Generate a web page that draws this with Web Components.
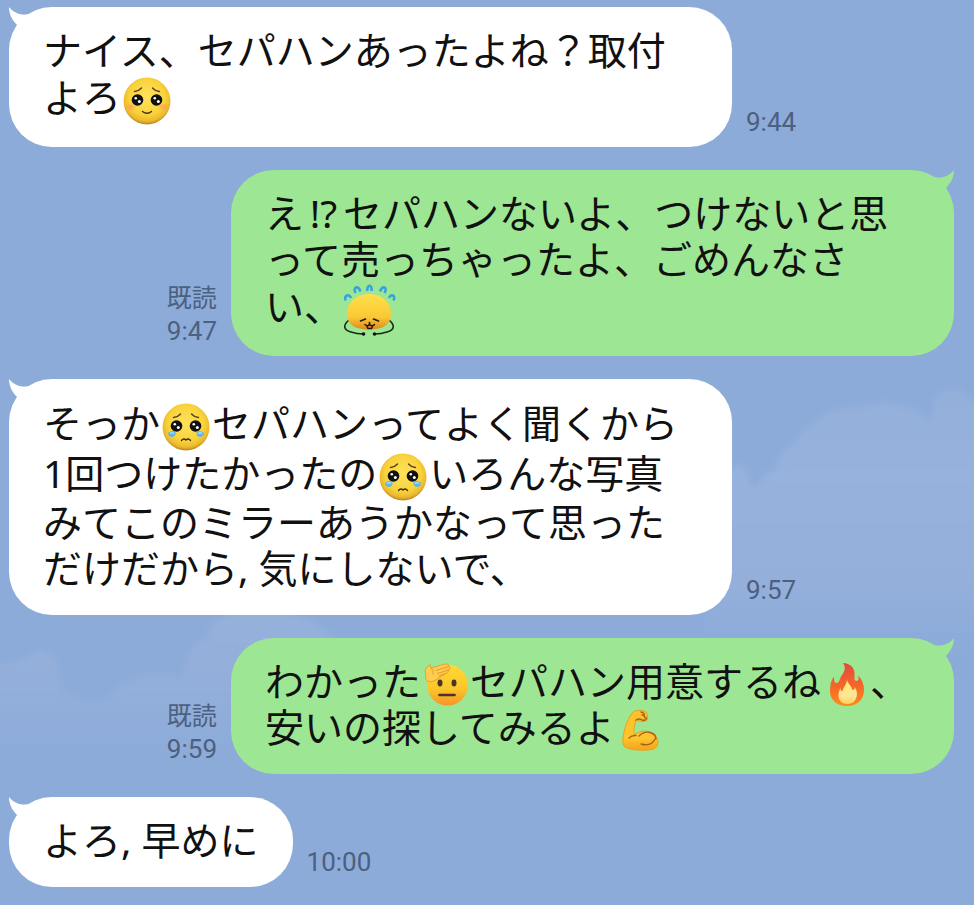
<!DOCTYPE html>
<html lang="ja">
<head>
<meta charset="utf-8">
<meta name="viewport" content="width=device-width, initial-scale=1">
<title>トーク</title>
<style>
    body {
        margin: 0;
        background: #8cabd9;
        font-family: "Noto Sans", "Noto Sans CJK JP", sans-serif;
    }
    .wide {
        display: inline-block;
        width: 1em;
        text-align: center;
    }
</style>
</head>
<body>
<chat-room>
    <chat-message time="9:44">ナイス、セパハンあったよね？取付よろ<chat-emoji name="pleading"></chat-emoji></chat-message>
    <chat-message sent time="9:47">え<span class="wide">!?</span>セパハンないよ、つけないと思って売っちゃったよ、ごめんなさい、<chat-emoji name="bow"></chat-emoji></chat-message>
    <chat-message time="9:57">そっか<chat-emoji name="tearful"></chat-emoji>セパハンってよく聞くから1回つけたかったの<chat-emoji name="tearful"></chat-emoji>いろんな写真みてこのミラーあうかなって思っただけだから, 気にしないで、</chat-message>
    <chat-message sent time="9:59">わかった<chat-emoji name="salute" small></chat-emoji>セパハン用意するね<chat-emoji name="fire" small></chat-emoji>、安いの探してみるよ<chat-emoji name="muscle" small></chat-emoji></chat-message>
    <chat-message time="10:00">よろ, 早めに</chat-message>
</chat-room>

<script>
// sky wallpaper and the column of messages
class ChatRoom extends HTMLElement {
    constructor() {
        super();
        this.attachShadow({ mode: "open" });
        this.shadowRoot.innerHTML = `
            <style>
                :host {
                    display: block;
                    position: relative;
                    box-sizing: border-box;
                    min-height: 100vh;
                    overflow: hidden;
                }
                .sky {
                    position: absolute;
                    inset: 0;
                    width: 100%;
                    height: 100%;
                }
                main {
                    position: relative;
                    display: flex;
                    flex-direction: column;
                    gap: 23px;
                    padding: 7px 20px 18px 9px;
                }
            </style>
            <svg class="sky" viewBox="0 0 974 905" preserveAspectRatio="xMidYMid slice" aria-hidden="true">
                <defs>
                    <linearGradient id="right" x1="0" y1="0" x2="0" y2="1">
                        <stop offset="0" stop-color="#97b2dc" stop-opacity=".6"/>
                        <stop offset=".3" stop-color="#97b2dc"/>
                        <stop offset=".7" stop-color="#94afda"/>
                        <stop offset="1" stop-color="#8cabd9" stop-opacity="0"/>
                    </linearGradient>
                    <linearGradient id="left" x1="0" y1="0" x2="0" y2="1">
                        <stop offset="0" stop-color="#96b1da"/>
                        <stop offset=".4" stop-color="#93aeda"/>
                        <stop offset="1" stop-color="#8cabd9" stop-opacity="0"/>
                    </linearGradient>
                    <filter id="soft"><feGaussianBlur stdDeviation="3"/></filter>
                </defs>
                <g filter="url(#soft)">
                    <path fill="url(#right)" d="M700 480Q715 468 733 468Q745 460 750 482Q754 495 762 478Q770 470 777 470Q776 452 795 443Q803 425 822 416Q836 405 858 408Q880 398 905 405Q922 408 926 420Q934 418 933 400Q945 382 960 390Q972 396 984 412V670H700Z"/>
                    <path fill="url(#left)" d="M-10 662Q15 667 32 654Q46 642 55 662Q60 672 62 690Q90 707 110 696Q118 680 138 680Q160 666 182 681Q184 655 198 642Q210 640 210 626Q222 612 250 610Q310 606 340 645V800H-10Z"/>
                </g>
            </svg>
            <main><slot></slot></main>
        `;
    }
}
customElements.define("chat-room", ChatRoom);

class ChatMessage extends HTMLElement {
    constructor() {
        super();
        this.attachShadow({ mode: "open" });
    }

    connectedCallback() {
        const sent = this.hasAttribute("sent");

        this.shadowRoot.innerHTML = `
            <style>
                :host {
                    display: flex;
                    align-items: flex-end;
                    gap: 14px;
                    --bubble: #fff;
                }
                :host([sent]) {
                    flex-direction: row-reverse;
                    --bubble: #9de693;
                }
                .bubble {
                    position: relative;
                    box-sizing: border-box;
                    max-width: min(723px, 80%);
                    padding: 20px 34px 24px;
                    border-radius: 43px;
                    background: var(--bubble);
                    color: #111;
                    font-size: 39px;
                    line-height: 46px;
                }
                p {
                    margin: 0;
                }
                .tail {
                    position: absolute;
                    top: 0;
                    left: 0;
                    width: 26px;
                    height: 26px;
                    fill: var(--bubble);
                }
                :host([sent]) .tail {
                    left: auto;
                    right: 0;
                    transform: scaleX(-1);
                }
                .meta {
                    display: flex;
                    flex-direction: column;
                    flex: none;
                    padding-bottom: 8px;
                    color: #4c607f;
                    font-family: Roboto, "Noto Sans CJK JP", sans-serif;
                    font-size: 26px;
                    line-height: 33px;
                }
                .read {
                    font-size: 25px;
                }
            </style>
            <div class="bubble">
                <svg class="tail" viewBox="0 0 26 26" aria-hidden="true">
                    <path d="M0 0C5 6 12 9 20 7L26 12L14 26L8 18C3 13 0 7 0 0Z"/>
                </svg>
                <p><slot></slot></p>
            </div>
            <div class="meta">
                ${sent ? `<span class="read">既読</span>` : ""}
                <time>${this.getAttribute("time")}</time>
            </div>
        `;
    }
}
customElements.define("chat-message", ChatMessage);

const faceFill = `
    <defs>
        <radialGradient id="face" cx=".5" cy=".42" r=".58">
            <stop offset="0" stop-color="#ffe25c"/>
            <stop offset=".65" stop-color="#f9d33c"/>
            <stop offset=".88" stop-color="#ebb92b"/>
            <stop offset="1" stop-color="#b98222"/>
        </radialGradient>
        <radialGradient id="blush">
            <stop offset="0" stop-color="#ff9a5c" stop-opacity=".8"/>
            <stop offset="1" stop-color="#ff9a5c" stop-opacity="0"/>
        </radialGradient>
    </defs>`;

const wetEyes = `
    <circle cx="25" cy="25" r="23.5" fill="url(#face)"/>
    <g fill="none" stroke="#59401a" stroke-width="1.4" stroke-linecap="round">
        <path d="M12.5 15.5Q17 15 19.500 12M30.500 12Q33 15 37.500 15.500"/>
    </g>
    <circle cx="15.500" cy="24" r="5.800" fill="#111"/>
    <circle cx="34.500" cy="24" r="5.800" fill="#111"/>
    <g fill="#fff">
        <circle cx="13.800" cy="22.300" r="1.300"/><circle cx="17.300" cy="25.500" r="1.500"/>
        <circle cx="32.800" cy="22.300" r="1.300"/><circle cx="36.300" cy="25.500" r="1.500"/>
    </g>`;

const emojis = {
    pleading: {
        label: "うるうる",
        art: `${faceFill}${wetEyes}
            <ellipse cx="8.500" cy="31" rx="6" ry="4.500" fill="url(#blush)"/>
            <ellipse cx="41.500" cy="31" rx="6" ry="4.500" fill="url(#blush)"/>
            <path d="M20.500 35.500Q25 39 29.500 35.500" fill="none" stroke="#3c2a12" stroke-width="1.300" stroke-linecap="round"/>`
    },
    tearful: {
        label: "泣き顔",
        art: `${faceFill}${wetEyes}
            <path d="M7 31Q11 27.500 14.500 30Q15 34.500 11 35Q7 34.500 7 31Z" fill="#62b5e8"/>
            <path d="M43 31Q39 27.500 35.500 30Q35 34.500 39 35Q43 34.500 43 31Z" fill="#62b5e8"/>
            <path d="M9 31.500Q11 30 13 31.500M37 31.500Q39 30 41 31.500" stroke="#c5e8fb" stroke-width="1.200" fill="none"/>
            <path d="M20.500 38.500Q22.500 36 25 38Q27.500 36 29.500 38.500" fill="none" stroke="#3c2a12" stroke-width="1.400" stroke-linecap="round"/>`
    },
    bow: {
        label: "ぺこり",
        art: `
            <defs>
                <linearGradient id="head" x1="0" y1="0" x2="0" y2="1">
                    <stop offset="0" stop-color="#fee04c"/>
                    <stop offset=".65" stop-color="#fbc835"/>
                    <stop offset="1" stop-color="#dd8a1f"/>
                </linearGradient>
            </defs>
            <path d="M5 35C-1 40 -1 45 7 47Q13 49 19 49M45 35C51 40 51 45 43 47Q37 49 31 49" fill="none" stroke="#172817" stroke-width="1.600"/>
            <circle cx="19.500" cy="49" r="1.800" fill="#111"/>
            <circle cx="30.500" cy="49" r="1.800" fill="#111"/>
            <path d="M25 9C38 9 47 18 47 28.500C47 40 39 44.500 25 44.500C11 44.500 3 40 3 28.500C3 18 12 9 25 9Z" fill="url(#head)"/>
            <g fill="none" stroke="#36a3df" stroke-width="2.600">
                <path d="M1.500 15.500C0 10 5 8.500 7 13"/>
                <path d="M11.500 8C8.500 2 14 0 16.500 6.500"/>
                <path d="M23.500 6C22.500 -1 28.500 -1 27.500 6"/>
                <path d="M36 6.500C38.500 0 44 2 40.500 8"/>
                <path d="M45 13C47 8.500 52 10 49.500 15.500"/>
            </g>
            <g fill="none" stroke="#2d1b08" stroke-width="1.600" stroke-linecap="round">
                <path d="M16.500 36L21.500 34M29.500 34L34.500 36"/>
                <path d="M21 39.500Q23.500 42 25.500 39.500Q28 42 30.500 39.500M23 41.500L24 43.500H27.500L28.500 41.500"/>
                <path d="M25.500 37.500V40"/>
            </g>`
    },
    salute: {
        label: "敬礼",
        art: `
            <defs>
                <linearGradient id="head" x1="0" y1="0" x2="0" y2="1">
                    <stop offset="0" stop-color="#fed936"/>
                    <stop offset=".6" stop-color="#fcc52a"/>
                    <stop offset="1" stop-color="#f79329"/>
                </linearGradient>
            </defs>
            <circle cx="24.500" cy="23" r="20.500" fill="url(#head)"/>
            <ellipse cx="17" cy="21" rx="2.500" ry="3.400" fill="#4a3328"/>
            <ellipse cx="31" cy="21" rx="2.500" ry="3.400" fill="#4a3328"/>
            <path d="M16.500 33H31.500" stroke="#4a3328" stroke-width="2.600" stroke-linecap="round"/>
            <path d="M2.500 12Q1.500 7 4 5L7 2.500L8 6L22 2Q26 1.500 26 4Q28.500 5.500 26 8Q25.500 10.500 22 12L12 18.500Q8 21 4 19Q2 17 2.500 12Z" fill="#fdcc50" stroke="#ef9f27" stroke-width="1"/>
            <path d="M13 8.500L25.500 4.500M14.500 11.500L25.500 8M16 14L22 11.500M8 6Q11 8 10 12" fill="none" stroke="#e59a2c" stroke-width="1" stroke-linecap="round"/>`
    },
    fire: {
        label: "炎",
        art: `
            <defs>
                <linearGradient id="flame" x1="0" y1="0" x2="0" y2="1">
                    <stop offset="0" stop-color="#e24a3c"/>
                    <stop offset=".5" stop-color="#f4642b"/>
                    <stop offset="1" stop-color="#ff8a1a"/>
                </linearGradient>
                <linearGradient id="core" x1="0" y1="0" x2="0" y2="1">
                    <stop offset="0" stop-color="#ffeb6b"/>
                    <stop offset=".7" stop-color="#ffe59a"/>
                    <stop offset="1" stop-color="#ffd052"/>
                </linearGradient>
            </defs>
            <path d="M20 1C27 1 32 6 31.500 12C31.500 16 31 19 33.500 19C36 19 36 16 35 13.500C39 17 41 23 41 28C41 38 34 44 24 44C14 44 7 38 7 29C7 23 8 18 11 14.500C11 18 11 21 13.500 21C17 21 16 17 19 13C22 9 23 5 20 1Z" fill="url(#flame)"/>
            <path d="M24 17C24 21 28 23 29 27C30 29 32 28 31.500 25C34 28 34.500 32 33.500 35C32 40 29 42 24 42C18.500 42 15.500 38 15.500 33C15.500 30 16.500 28 17.500 26C17.500 29 19 30 20 28C21 24 24 22 24 17Z" fill="url(#core)"/>`
    },
    muscle: {
        label: "力こぶ",
        art: `
            <defs>
                <linearGradient id="arm" x1="0" y1="0" x2="0" y2="1">
                    <stop offset="0" stop-color="#fdc22d"/>
                    <stop offset=".7" stop-color="#fec52f"/>
                    <stop offset="1" stop-color="#f5a11d"/>
                </linearGradient>
            </defs>
            <path d="M18 3Q24 1 29 4Q32 8 30 12Q26 15 22 13L19 12Q16 20 17 27Q25 21 33 24Q41 27 41 35Q40 42 31 42Q15 43 8 39Q5 37 6 30Q8 15 14 7Q15 4 18 3Z" fill="url(#arm)" stroke="#f0a01c" stroke-width="1"/>
            <g fill="none" stroke="#a8611b" stroke-width="1.400" stroke-linecap="round">
                <path d="M12 30Q15 27 19 27.500M22 28Q27 23 33 24.500Q39 26 39 31M24 36Q34 39 38 31"/>
                <path d="M19 12Q22 10 25 12Q29 13 29.500 10M24 4Q28 5 27 8M25 7Q28 7 28 10"/>
            </g>`
    }
};

class ChatEmoji extends HTMLElement {
    constructor() {
        super();
        this.attachShadow({ mode: "open" });
    }

    connectedCallback() {
        const emoji = emojis[this.getAttribute("name")];
        const box = this.hasAttribute("small") ? "-2 -4 49 46" : "-1 -3 52 50";

        this.shadowRoot.innerHTML = `
            <style>
                :host {
                    display: inline-block;
                    width: 52px;
                    height: 50px;
                    vertical-align: -11px;
                }
                :host([small]) {
                    width: 49px;
                    height: 46px;
                    vertical-align: -8px;
                }
                svg {
                    display: block;
                    width: 100%;
                    height: 100%;
                    overflow: visible;
                }
            </style>
            <svg viewBox="${box}" role="img" aria-label="${emoji.label}">${emoji.art}</svg>
        `;
    }
}
customElements.define("chat-emoji", ChatEmoji);
</script>
</body>
</html>
